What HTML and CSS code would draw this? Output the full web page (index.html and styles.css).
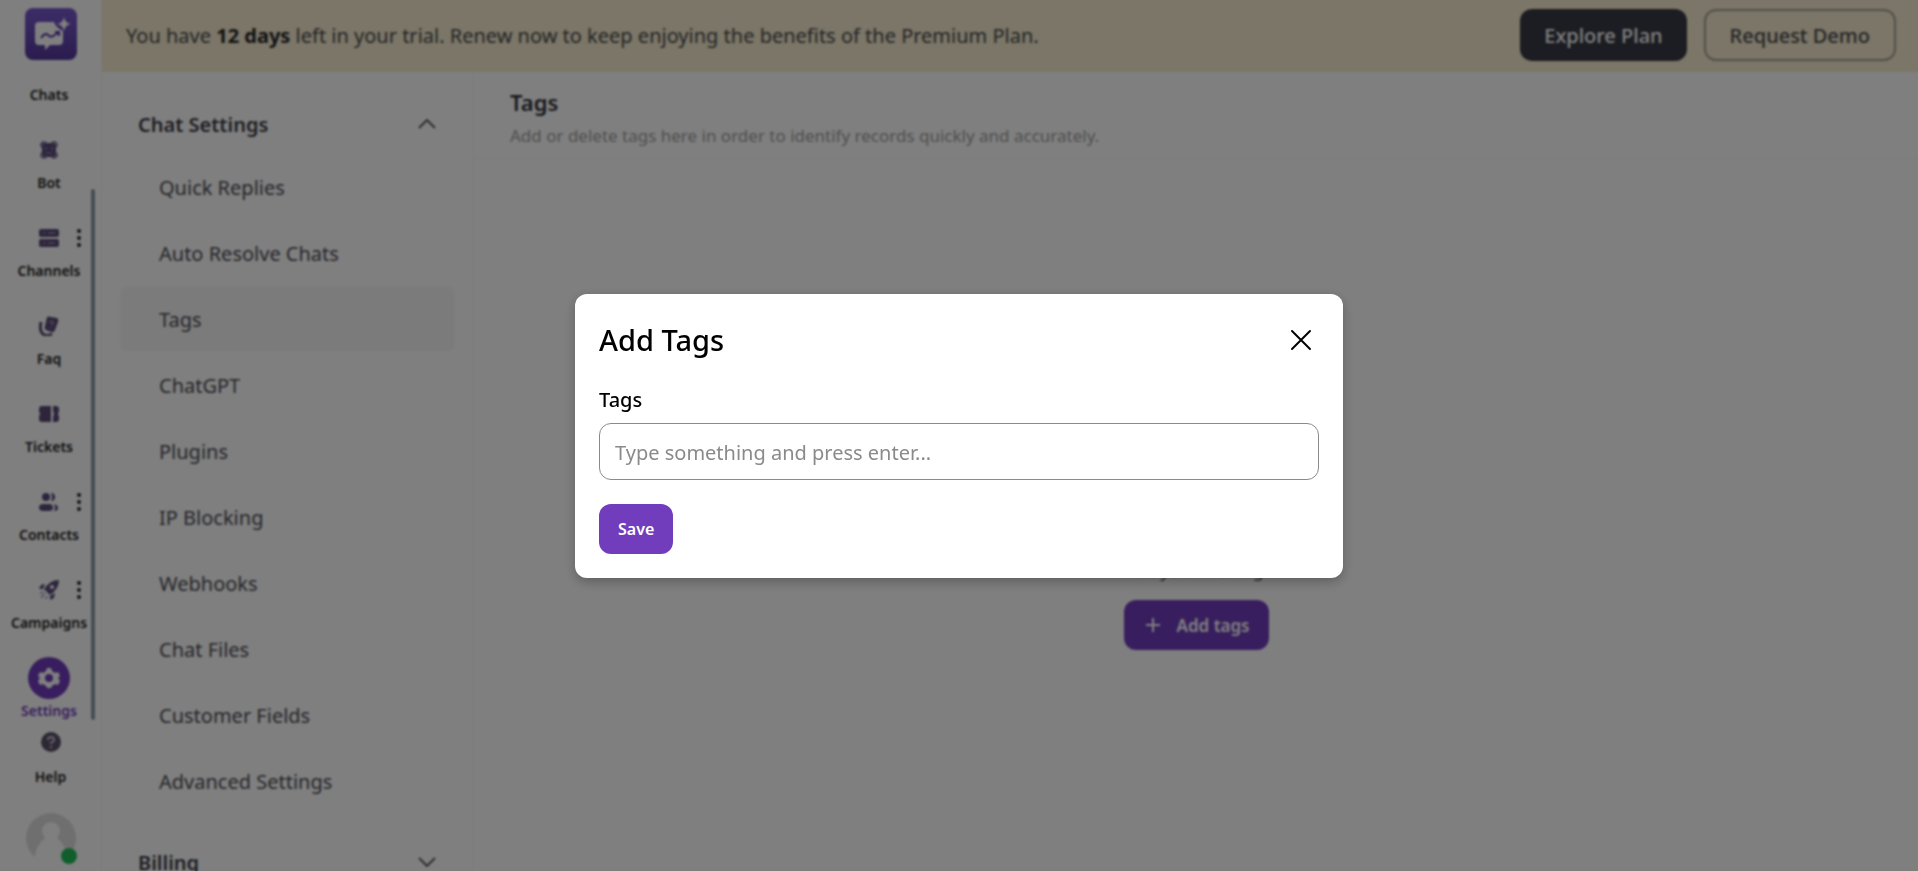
FILE: index.html
```html
<!DOCTYPE html>
<html lang="en">
<head>
<meta charset="utf-8">
<title>Tags</title>
<link rel="stylesheet" href="styles.css">
</head>
<body>
<div class="app">
  <aside class="rail">
    <a class="logo" href="#" aria-label="Home">
      <svg width="52" height="52" viewBox="0 0 52 52">
        <defs><linearGradient id="lg" x1="0" y1="0" x2="0" y2="1"><stop offset="0" stop-color="#7a5ad0"/><stop offset="1" stop-color="#56389c"/></linearGradient></defs>
        <rect width="52" height="52" rx="8" fill="url(#lg)"/>
        <path d="M14 14H29Q31 20 38 23V33Q38 37 34 37H25L20 42V37H14Q10 37 10 33V18Q10 14 14 14Z" fill="#fff"/>
        <path d="M39 9Q40 15 46 16Q40 17 39 23Q38 17 32 16Q38 15 39 9Z" fill="#fff"/>
        <path d="M16 30Q20 24 23 27T28 28L33 25M30 24H34V28" fill="none" stroke="#5a3aa6" stroke-width="2"/>
      </svg>
    </a>
    <nav class="rail-nav">
      <a class="rail-item" href="#"><span class="rail-icon"><svg width="20" height="20" viewBox="0 0 20 20"><path d="M2 2H18V14H8L2 19Z"/></svg></span><span>Chats</span></a>
      <a class="rail-item" href="#"><span class="rail-icon"><svg width="20" height="20" viewBox="0 0 20 20"><path d="M5 3H15L17 5V15L15 17H5L3 15V5Z"/><g fill="none" stroke="#8474a0" stroke-width="2"><path d="M4 7H3A2 2 0 1 1 7 3V4M13 4V3A2 2 0 1 1 17 7H16M16 13H17A2 2 0 1 1 13 17V16M7 16V17A2 2 0 1 1 3 13H4"/></g><path d="M7 7V10M13 7V10M7 13H13" fill="none" stroke="#a79cba" stroke-width="1"/></svg></span><span>Bot</span></a>
      <a class="rail-item" href="#"><span class="rail-icon"><svg width="20" height="20" viewBox="0 0 20 20"><rect y="1" width="20" height="8" rx="2"/><rect y="11" width="20" height="8" rx="2"/><path d="M4 5H6M9 5H16M4 15H6M9 15H16" stroke="#b9b0cb" stroke-width="1"/></svg></span><span>Channels</span><svg class="dots" width="4" height="18" viewBox="0 0 4 18"><circle cx="2" cy="2" r="2"/><circle cx="2" cy="9" r="2"/><circle cx="2" cy="16" r="2"/></svg></a>
      <a class="rail-item" href="#"><span class="rail-icon"><svg width="20" height="20" viewBox="0 0 20 20"><path d="M8 1Q10 0 12 1L18 2Q20 3 19 6L16 14Q15 17 12 16L7 14Q5 13 6 10Z"/><path d="M2 6Q0 15 4 18Q7 21 13 18" fill="none" stroke="#5b4b78" stroke-width="3"/><path d="M10 6Q14 4 14 7Q14 9 12 9M11 12H12" fill="none" stroke="#c0b7d0" stroke-width="1"/></svg></span><span>Faq</span></a>
      <a class="rail-item" href="#"><span class="rail-icon"><svg width="20" height="20" viewBox="0 0 20 20"><path d="M3 2H12V18H3Q0 18 0 15V12Q2 10 0 8V5Q0 2 3 2ZM14 2H17Q20 2 20 5V8Q18 10 20 12V15Q20 18 17 18H14V13L15 10L14 7Z"/></svg></span><span>Tickets</span></a>
      <a class="rail-item" href="#"><span class="rail-icon"><svg width="20" height="20" viewBox="0 0 20 20"><circle cx="7" cy="5" r="4"/><rect y="12" width="14" height="7" rx="4"/><path d="M12 1A4 4 0 0 1 12 9Q14 5 12 1ZM15 12Q19 13 19 16T15 19Q17 16 15 12Z"/></svg></span><span>Contacts</span><svg class="dots" width="4" height="18" viewBox="0 0 4 18"><circle cx="2" cy="2" r="2"/><circle cx="2" cy="9" r="2"/><circle cx="2" cy="16" r="2"/></svg></a>
      <a class="rail-item" href="#"><span class="rail-icon"><svg width="20" height="20" viewBox="0 0 20 20"><path fill-rule="evenodd" d="M20 0Q20 9 11 15L5 9Q11 0 20 0ZM13 5A2 2 0 1 0 15 7A2 2 0 0 0 13 5ZM6 4L2 5L0 9H4ZM16 13L15 18L11 20V16Z"/><path d="M2 18L6 13M1 14L4 11M6 19L9 16" stroke="#5b4b78" stroke-width="1"/></svg></span><span>Campaigns</span><svg class="dots" width="4" height="18" viewBox="0 0 4 18"><circle cx="2" cy="2" r="2"/><circle cx="2" cy="9" r="2"/><circle cx="2" cy="16" r="2"/></svg></a>
      <a class="rail-item current" href="#"><span class="rail-icon"><svg width="24" height="24" viewBox="0 0 24 24"><path fill="#fff" fill-rule="evenodd" d="M9 5L10 2H14L15 5L18 7L21 6L23 10L21 12L23 15L21 19L18 18L15 20L14 22H10L9 20L6 18L3 19L1 15L3 12L1 10L3 6L6 7ZM12 8A4 4 0 1 0 12 16A4 4 0 1 0 12 8Z"/></svg></span><span>Settings</span></a>
    </nav>
    <span class="scroll-thumb"></span>
    <div class="rail-foot">
      <a class="help" href="#"><svg width="22" height="22" viewBox="0 0 22 22"><circle cx="11" cy="11" r="10"/><path d="M8 9Q8 6 11 6T14 9Q14 10 11 12V13M11 15V17" fill="none" stroke="#c9c2d6" stroke-width="2"/></svg><span>Help</span></a>
      <button class="avatar" aria-label="Account"><svg width="52" height="52" viewBox="0 0 52 52"><defs><clipPath id="av"><circle cx="26" cy="26" r="25"/></clipPath></defs><circle cx="26" cy="26" r="25" fill="#dedede"/><g clip-path="url(#av)" fill="#fff"><circle cx="26" cy="19" r="9"/><path d="M9 52Q9 34 20 26H32Q43 34 43 52Z"/></g><circle cx="44" cy="44" r="8" fill="#1fbd56"/></svg></button>
    </div>
  </aside>
  <div class="body">
    <div class="banner">
      <p>You have <strong>12 days</strong> left in your trial. Renew now to keep enjoying the benefits of the Premium Plan.</p>
      <div class="banner-actions"><button class="explore">Explore Plan</button><button class="demo">Request Demo</button></div>
    </div>
    <div class="columns">
      <nav class="menu">
        <button class="group">Chat Settings<svg width="18" height="10" viewBox="0 0 18 10"><path d="M1 9L9 1L17 9"/></svg></button>
        <a href="#">Quick Replies</a>
        <a href="#">Auto Resolve Chats</a>
        <a href="#" class="selected">Tags</a>
        <a href="#">ChatGPT</a>
        <a href="#">Plugins</a>
        <a href="#">IP Blocking</a>
        <a href="#">Webhooks</a>
        <a href="#">Chat Files</a>
        <a href="#">Customer Fields</a>
        <a href="#">Advanced Settings</a>
        <button class="group second">Billing<svg width="18" height="10" viewBox="0 0 18 10"><path d="M1 1L9 9L17 1"/></svg></button>
      </nav>
      <main class="content">
        <header>
          <h1>Tags</h1>
          <p>Add or delete tags here in order to identify records quickly and accurately.</p>
        </header>
        <section class="empty">
          <p>Add your first tag.</p>
          <button class="add"><svg width="16" height="16" viewBox="0 0 16 16"><path d="M8 1V15M1 8H15"/></svg>Add tags</button>
        </section>
      </main>
    </div>
  </div>
</div>
<div class="overlay">
  <form class="dialog" role="dialog" aria-labelledby="dialog-title">
    <div class="dialog-head">
      <h2 id="dialog-title">Add Tags</h2>
      <button type="button" class="close" aria-label="Close"><svg width="24" height="24" viewBox="0 0 24 24"><path d="M3 3L21 21M21 3L3 21"/></svg></button>
    </div>
    <label for="tags">Tags</label>
    <input id="tags" type="text" placeholder="Type something and press enter...">
    <button type="button" class="save">Save</button>
  </form>
</div>
</body>
</html>
```

FILE: styles.css
```css
* { box-sizing: border-box; }
body, h1, h2, p { margin: 0; }
body { font-family: "Noto Sans", "Open Sans", sans-serif; color: #000; background: #fff; height: 100vh; overflow: hidden; }
button { font: inherit; border: 0; background: none; padding: 0; cursor: pointer; }
a { color: inherit; text-decoration: none; }
svg { display: block; flex: none; }

.app { display: flex; height: 100vh; overflow: hidden; }
.rail { position: relative; display: flex; flex-direction: column; width: 102px; flex: none; border-right: 1px solid #f2f2f2; padding-top: 8px; font-size: 14px; font-weight: 600; color: #222; }
.logo { padding-left: 25px; }
.rail-nav { flex: 1; min-height: 0; width: 98px; margin-top: 20px; display: flex; flex-direction: column; justify-content: flex-end; overflow: hidden; }
.rail-item { position: relative; flex: none; height: 88px; display: flex; flex-direction: column; align-items: center; justify-content: flex-end; line-height: 20px; gap: 2px; }
.rail-icon { width: 42px; height: 42px; border-radius: 50%; display: grid; place-items: center; fill: #5b4b78; }
.current { color: #713dbc; }
.current .rail-icon { background: #713dbc; }
.dots { position: absolute; left: 77px; top: 36px; fill: #222; }
.scroll-thumb { position: absolute; left: 91px; top: 189px; bottom: 151px; width: 4px; border-radius: 2px; background: #8b9ca8; }
.rail-foot { height: 150px; flex: none; display: flex; flex-direction: column; align-items: center; justify-content: space-between; padding: 10px 0 7px; }
.help { display: flex; flex-direction: column; align-items: center; gap: 14px; line-height: 20px; }
.help svg { fill: #5b5068; }

.body { flex: 1; min-width: 0; display: flex; flex-direction: column; }
.banner { display: flex; align-items: center; justify-content: space-between; flex: none; height: 72px; padding: 0 22px 2px 24px; background: #f6ecce; color: #4b4b4f; font-size: 20px; }
.banner strong { color: #26262c; font-weight: 700; }
.banner-actions { display: flex; gap: 17px; font-weight: 500; }
.explore, .demo { height: 52px; border-radius: 12px; padding: 0 24px; }
.explore { background: #383a44; color: #fff; }
.demo { border: 2px solid #a5a095; color: #4b4b4f; }

.columns { flex: 1; min-height: 0; display: flex; }
.menu { width: 372px; flex: none; border-right: 1px solid #f2f2f2; padding: 22px 18px 0; overflow: hidden; font-size: 20px; color: #4c4c54; }
.menu a { display: flex; align-items: center; height: 66px; padding-left: 39px; border-radius: 8px; }
.menu .selected { background: #f7f7f7; }
.group { display: flex; align-items: center; justify-content: space-between; width: 100%; height: 60px; padding: 0 19px 0 18px; font-weight: 600; color: #3c3c46; }
.group svg { fill: none; stroke: #5c5c64; stroke-width: 2; }
.second { margin-top: 18px; }

.content { flex: 1; display: flex; flex-direction: column; }
.content header { height: 87px; flex: none; padding: 14px 36px 0; border-bottom: 1px solid #f2f2f2; }
h1 { font-size: 22px; line-height: 32px; font-weight: 600; color: #33333b; }
.content header p { font-size: 17px; line-height: 24px; margin-top: 6px; color: #a0a0a0; }
.empty { flex: 1; display: flex; flex-direction: column; align-items: center; justify-content: flex-end; gap: 18px; padding-bottom: 221px; font-size: 17px; color: #4c4c54; }
.add { display: flex; align-items: center; gap: 16px; height: 50px; padding: 0 19px 0 21px; border-radius: 12px; background: #713dbc; color: #fff; font-size: 17px; font-weight: 600; }
.add svg { fill: none; stroke: #fff; stroke-width: 2; }

.overlay { position: fixed; inset: 0; display: grid; place-items: center; background: rgba(0, 0, 0, .5); backdrop-filter: blur(1px); }
.dialog { width: 768px; max-width: 90%; display: flex; flex-direction: column; background: #fff; border-radius: 12px; padding: 24px; box-shadow: 0 4px 12px rgba(0, 0, 0, .25); }
.dialog-head { display: flex; align-items: center; justify-content: space-between; height: 44px; padding-right: 6px; }
h2 { font-size: 29px; font-weight: 500; }
.close svg { fill: none; stroke: #000; stroke-width: 2; stroke-linecap: round; }
.dialog label { margin-top: 24px; font-size: 20px; line-height: 28px; font-weight: 500; }
.dialog input { height: 57px; margin: 9px 0 24px; padding: 2px 15px 0; border: 1px solid #8a8a8a; border-radius: 12px; font: 20px "Noto Sans", "Open Sans", sans-serif; color: #000; }
.dialog input::placeholder { color: #8a8a8a; }
.save { align-self: flex-start; height: 50px; padding: 0 19px; border-radius: 12px; background: #713dbc; color: #fff; font-size: 16px; font-weight: 600; }
```
